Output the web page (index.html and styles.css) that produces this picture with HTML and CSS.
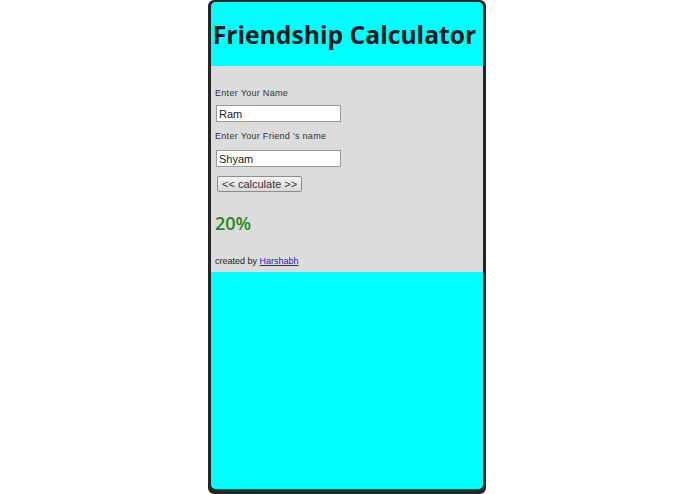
FILE: index.html
```html
<!DOCTYPE html>
<html lang="en">
<head>
    <meta charset="UTF-8">
    <title>Friendship Calculator</title>
    <link rel="stylesheet" href="styles.css">
</head>
<body>
    <div class="phone">
        <div class="screen">
            <div class="header">
                <h1 class="title">Friendship Calculator</h1>
            </div>
            <div class="content">
                <label class="field-label" for="name">Enter Your Name</label>
                <input class="field" id="name" type="text" value="Ram">
                <label class="field-label" for="friend">Enter Your Friend 's name</label>
                <input class="field" id="friend" type="text" value="Shyam">
                <button class="calc-btn" type="button">&lt;&lt; calculate &gt;&gt;</button>
                <p class="result">20%</p>
                <p class="credit">created by <a href="#">Harshabh</a></p>
            </div>
            <div class="footer"></div>
        </div>
    </div>
</body>
</html>
```

FILE: styles.css
```css
html, body {
    margin: 0;
    padding: 0;
    height: 100%;
    background: #ffffff;
}

body {
    display: flex;
    justify-content: center;
    font-family: 'Liberation Sans', Arial, sans-serif;
}

.phone {
    width: 272px;
    height: 487px;
    margin-left: -1px;
    border: 3px solid #262626;
    border-top-width: 2px;
    border-bottom-width: 5px;
    border-radius: 6px;
    background: #262626;
}

.screen {
    height: 100%;
    display: flex;
    flex-direction: column;
    border-radius: 5px;
    overflow: hidden;
    box-shadow: inset 0 0 0 1px #8a8a8a;
    background: #00ffff;
}

.header {
    height: 64px;
    background: #00ffff;
    display: flex;
    align-items: center;
    justify-content: center;
}

.title {
    margin: 0 5px 0 0;
    font-family: 'Open Sans', 'DejaVu Sans', sans-serif;
    font-size: 24.7px;
    font-weight: bold;
    color: #0a1a1f;
    white-space: nowrap;
}

.content {
    background: #dcdcdc;
    padding: 22px 0 6px 4px;
    display: flex;
    flex-direction: column;
    align-items: flex-start;
}

.field-label {
    font-size: 9px;
    color: #333333;
    letter-spacing: 0.3px;
    margin-bottom: 7px;
}

.field {
    width: 119px;
    height: 13px;
    margin: 0 0 9px 1px;
    padding: 1px 2px;
    border: 1px solid #9a9a9a;
    background: #ffffff;
    font-family: 'Liberation Sans', Arial, sans-serif;
    font-size: 11px;
    color: #222222;
}

#friend {
    margin-top: 2px;
}

.calc-btn {
    margin: 0 0 0 2px;
    height: 16px;
    padding: 0 4px;
    border: 1px solid #8c8c8c;
    border-radius: 2px;
    background: linear-gradient(#f4f4f4, #dadada);
    font-family: 'Liberation Sans', Arial, sans-serif;
    font-size: 11px;
    color: #333333;
}

.result {
    margin: 21px 0 0 0;
    line-height: 20px;
    font-family: 'Open Sans', 'DejaVu Sans', sans-serif;
    font-size: 18px;
    font-weight: 600;
    color: #1f8a1f;
}

.credit {
    margin: 23px 0 0 0;
    font-size: 9px;
    color: #222222;
}

.credit a {
    color: #2020d0;
}

.footer {
    flex: 1;
    background: #00ffff;
}
```
